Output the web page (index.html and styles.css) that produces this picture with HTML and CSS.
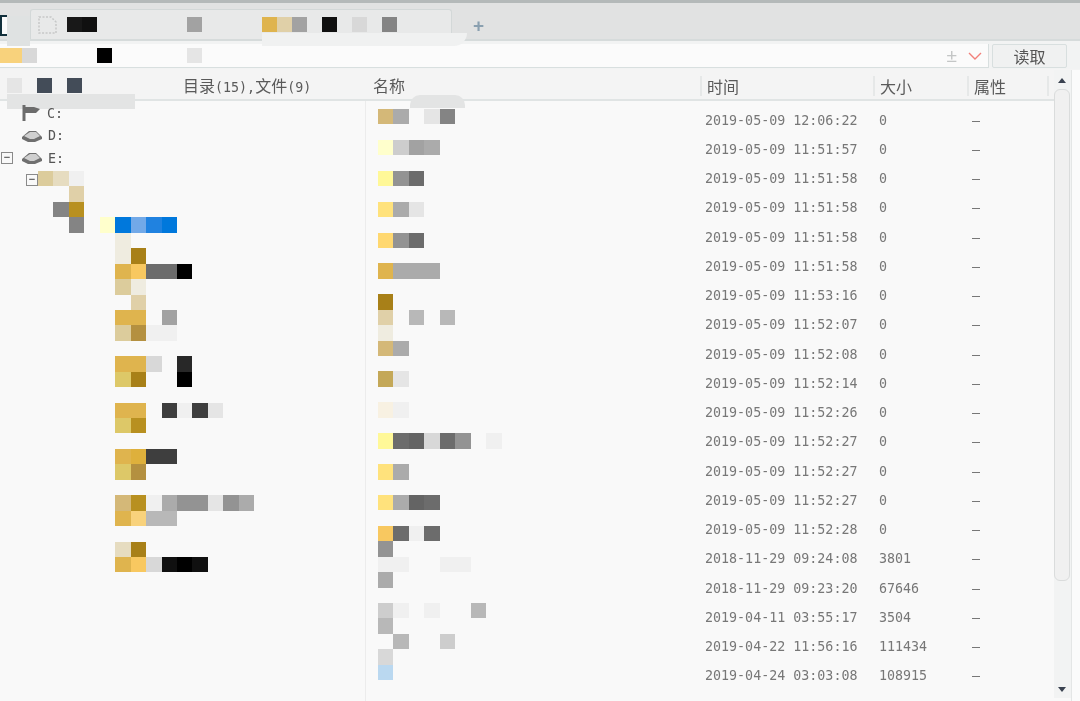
FILE: index.html
```html
<!DOCTYPE html>
<html lang="zh">
<head>
<meta charset="utf-8">
<title>文件管理</title>
<link rel="stylesheet" href="styles.css">
</head>
<body>
<div class="app">
  <div class="topline"></div>
  <div class="tabbar">
    <div class="winmark"></div>
    <div class="tab">
      <svg class="docicon" width="20" height="18" viewBox="0 0 20 18"><path d="M1 1h12l5 5v11H1z" fill="none" stroke="#c6c8c8" stroke-width="1.5" stroke-dasharray="2 1.5"/></svg>
      <div class="strip tabstrip"><i class="k2"></i><i class="k1"></i><i></i><i></i><i></i><i></i><i></i><i></i><i class="g5"></i><i></i><i></i><i></i><i></i><i class="y3"></i><i class="t2"></i><i class="g5"></i><i></i><i class="k1"></i><i></i><i class="g1"></i><i></i><i class="g7"></i></div>
    </div>
    <span class="plus">+</span>
  </div>
  <div class="smear smear-tab"></div>
  <div class="smear smear-left"></div>
  <div class="addr">
    <div class="addr-field">
      <div class="strip addrstrip"><i class="y5 half"></i><i class="g1"></i><i></i><i></i><i></i><i></i><i class="k0"></i><i></i><i></i><i></i><i></i><i></i><i class="g0"></i></div>
      <span class="plusminus">±</span>
      <svg class="chev" width="14" height="8" viewBox="0 0 14 8"><path d="M1 1l6 6 6-6" fill="none" stroke="#f2807a" stroke-width="1.4"/></svg>
    </div>
    <button class="read">读取</button>
  </div>
  <div class="head">
    <div class="h-tree">
      <div class="strip headstrip"><i class="g0"></i><i></i><i class="s1"></i><i></i><i class="s1"></i></div>
      <span class="h-count">目录<span class="asc">(15),</span>文件<span class="asc">(9)</span></span>
    </div>
    <div class="h-name"><span>名称</span></div>
    <div class="h-time"><span>时间</span></div>
    <div class="h-size"><span>大小</span></div>
    <div class="h-attr"><span>属性</span></div>
    <div class="h-end"></div>
  </div>
  <div class="smear smear-head"></div>
  <div class="smear smear-name"></div>
  <div class="main">
    <div class="tree">
      <div class="drive">
        <svg class="flag" width="21" height="18" viewBox="0 0 21 18"><path d="M3 1v16" stroke="#6c6c6c" stroke-width="3"/><path d="M4 3h9l6 2-4 4H4z" fill="#6c6c6c"/></svg>
        <b>C:</b>
      </div>
      <div class="drive">
        <svg width="22" height="14" viewBox="0 0 22 14"><path d="M1 8l7-6h7l6 6v2l-7 3H7l-6-3z" fill="#6f6f6f"/><path d="M3 7l6-4h6l4 4-6 3H9z" fill="#cfcfcf"/></svg>
        <b>D:</b>
      </div>
      <div class="drive">
        <span class="box">−</span>
        <svg width="22" height="14" viewBox="0 0 22 14"><path d="M1 8l7-6h7l6 6v2l-7 3H7l-6-3z" fill="#6f6f6f"/><path d="M3 7l6-4h6l4 4-6 3H9z" fill="#cfcfcf"/></svg>
        <b>E:</b>
      </div>
      <div class="mosaic tree-mosaic">
        <div class="mrow"><span class="box subbox">−</span><i class="t3"></i><i class="t1"></i><i class="g00"></i></div>
        <div class="mrow"><i></i><i></i><i class="t2"></i></div>
        <div class="mrow"><i></i><i class="g7"></i><i class="b2"></i></div>
        <div class="mrow"><i></i><i></i><i class="g7"></i><i></i><i class="u0"></i><i class="a1"></i><i class="a2"></i><i class="a3"></i><i class="a1"></i></div>
        <div class="mrow"><i></i><i></i><i></i><i></i><i></i><i class="e1"></i></div>
        <div class="mrow"><i></i><i></i><i></i><i></i><i></i><i class="e1"></i><i class="b1"></i></div>
        <div class="mrow"><i></i><i></i><i></i><i></i><i></i><i class="y3"></i><i class="y4"></i><i class="g8"></i><i class="g8"></i><i class="k0"></i></div>
        <div class="mrow"><i></i><i></i><i></i><i></i><i></i><i class="t3"></i><i class="e1"></i></div>
        <div class="mrow"><i></i><i></i><i></i><i></i><i></i><i></i><i class="t2"></i></div>
        <div class="mrow"><i></i><i></i><i></i><i></i><i></i><i class="y3"></i><i class="y3"></i><i></i><i class="g5"></i></div>
        <div class="mrow"><i></i><i></i><i></i><i></i><i></i><i class="t3"></i><i class="b3"></i><i class="g00"></i><i class="g00"></i></div>
        <div class="mrow"></div>
        <div class="mrow"><i></i><i></i><i></i><i></i><i></i><i class="y3"></i><i class="y3"></i><i class="g1"></i><i></i><i class="k3"></i></div>
        <div class="mrow"><i></i><i></i><i></i><i></i><i></i><i class="t4"></i><i class="b1"></i><i></i><i></i><i class="k0"></i></div>
        <div class="mrow"></div>
        <div class="mrow"><i></i><i></i><i></i><i></i><i></i><i class="y3"></i><i class="y3"></i><i></i><i class="k4"></i><i class="g00"></i><i class="k4"></i><i class="g0"></i></div>
        <div class="mrow"><i></i><i></i><i></i><i></i><i></i><i class="t4"></i><i class="b2"></i></div>
        <div class="mrow"></div>
        <div class="mrow"><i></i><i></i><i></i><i></i><i></i><i class="y3"></i><i class="y2"></i><i class="k4"></i><i class="k4"></i></div>
        <div class="mrow"><i></i><i></i><i></i><i></i><i></i><i class="t4"></i><i class="b3"></i></div>
        <div class="mrow"></div>
        <div class="mrow"><i></i><i></i><i></i><i></i><i></i><i class="t5"></i><i class="b2"></i><i class="g00"></i><i class="g4"></i><i class="g6"></i><i class="g6"></i><i class="g0"></i><i class="g6"></i><i class="g4"></i></div>
        <div class="mrow"><i></i><i></i><i></i><i></i><i></i><i class="y3"></i><i class="y5"></i><i class="g3"></i><i class="g3"></i></div>
        <div class="mrow"></div>
        <div class="mrow"><i></i><i></i><i></i><i></i><i></i><i class="t1"></i><i class="b1"></i></div>
        <div class="mrow"><i></i><i></i><i></i><i></i><i></i><i class="y3"></i><i class="y4"></i><i class="g1"></i><i class="k1"></i><i class="k0"></i><i class="k1"></i></div>
      </div>
    </div>
    <div class="names mosaic">
      <div class="mrow"><i class="t5"></i><i class="g4"></i><i></i><i class="g0"></i><i class="g7"></i></div>
      <div class="mrow"></div>
      <div class="mrow"><i class="u0"></i><i class="g2"></i><i class="g5"></i><i class="g4"></i></div>
      <div class="mrow"></div>
      <div class="mrow"><i class="u1"></i><i class="g6"></i><i class="g8"></i></div>
      <div class="mrow"></div>
      <div class="mrow"><i class="u2"></i><i class="g4"></i><i class="g0"></i></div>
      <div class="mrow"></div>
      <div class="mrow"><i class="u3"></i><i class="g6"></i><i class="g8"></i></div>
      <div class="mrow"></div>
      <div class="mrow"><i class="y3"></i><i class="g4"></i><i class="g4"></i><i class="g4"></i></div>
      <div class="mrow"></div>
      <div class="mrow"><i class="b1"></i></div>
      <div class="mrow"><i class="t2"></i><i></i><i class="g3"></i><i></i><i class="g3"></i></div>
      <div class="mrow"><i class="e1"></i></div>
      <div class="mrow"><i class="t5"></i><i class="g4"></i></div>
      <div class="mrow"></div>
      <div class="mrow"><i class="t6"></i><i class="g0"></i></div>
      <div class="mrow"></div>
      <div class="mrow"><i class="e2"></i><i class="g00"></i></div>
      <div class="mrow"></div>
      <div class="mrow"><i class="u1"></i><i class="g8"></i><i class="k5"></i><i class="g1"></i><i class="g8"></i><i class="g6"></i><i></i><i class="g00"></i></div>
      <div class="mrow"></div>
      <div class="mrow"><i class="u2"></i><i class="g4"></i></div>
      <div class="mrow"></div>
      <div class="mrow"><i class="u2"></i><i class="g4"></i><i class="k5"></i><i class="g8"></i></div>
      <div class="mrow"></div>
      <div class="mrow"><i class="y4"></i><i class="g8"></i><i class="g00"></i><i class="g8"></i></div>
      <div class="mrow"><i class="g6"></i></div>
      <div class="mrow"><i class="g00"></i><i class="g00"></i><i></i><i></i><i class="g00"></i><i class="g00"></i></div>
      <div class="mrow"><i class="g4"></i></div>
      <div class="mrow"></div>
      <div class="mrow"><i class="g2"></i><i class="g00"></i><i></i><i class="g00"></i><i></i><i></i><i class="g3"></i></div>
      <div class="mrow"><i class="g3"></i></div>
      <div class="mrow"><i></i><i class="g3"></i><i></i><i></i><i class="g2"></i></div>
      <div class="mrow"><i class="g1"></i></div>
      <div class="mrow"><i class="sky"></i></div>
    </div>
    <div class="details">
      <div class="row"><span>2019-05-09 12:06:22</span><span>0</span><span>—</span></div>
      <div class="row"><span>2019-05-09 11:51:57</span><span>0</span><span>—</span></div>
      <div class="row"><span>2019-05-09 11:51:58</span><span>0</span><span>—</span></div>
      <div class="row"><span>2019-05-09 11:51:58</span><span>0</span><span>—</span></div>
      <div class="row"><span>2019-05-09 11:51:58</span><span>0</span><span>—</span></div>
      <div class="row"><span>2019-05-09 11:51:58</span><span>0</span><span>—</span></div>
      <div class="row"><span>2019-05-09 11:53:16</span><span>0</span><span>—</span></div>
      <div class="row"><span>2019-05-09 11:52:07</span><span>0</span><span>—</span></div>
      <div class="row"><span>2019-05-09 11:52:08</span><span>0</span><span>—</span></div>
      <div class="row"><span>2019-05-09 11:52:14</span><span>0</span><span>—</span></div>
      <div class="row"><span>2019-05-09 11:52:26</span><span>0</span><span>—</span></div>
      <div class="row"><span>2019-05-09 11:52:27</span><span>0</span><span>—</span></div>
      <div class="row"><span>2019-05-09 11:52:27</span><span>0</span><span>—</span></div>
      <div class="row"><span>2019-05-09 11:52:27</span><span>0</span><span>—</span></div>
      <div class="row"><span>2019-05-09 11:52:28</span><span>0</span><span>—</span></div>
      <div class="row"><span>2018-11-29 09:24:08</span><span>3801</span><span>—</span></div>
      <div class="row"><span>2018-11-29 09:23:20</span><span>67646</span><span>—</span></div>
      <div class="row"><span>2019-04-11 03:55:17</span><span>3504</span><span>—</span></div>
      <div class="row"><span>2019-04-22 11:56:16</span><span>111434</span><span>—</span></div>
      <div class="row"><span>2019-04-24 03:03:08</span><span>108915</span><span>—</span></div>
    </div>
    <div class="scroll">
      <div class="thumb"></div>
      <span class="arrow-down"></span>
    </div>
    <div class="rightedge"></div>
  </div>
  <div class="scroll-up"></div>
</div>
</body>
</html>
```
FILE: styles.css
```css
* { box-sizing: border-box; }
html, body { margin: 0; padding: 0; background: #f9f9f9; }
body { width: 1080px; height: 701px; overflow: hidden; }
.app {
  position: relative;
  width: 1080px;
  height: 701px;
  overflow: hidden;
  filter: blur(0.45px);
  font-family: "DejaVu Sans Mono", "Noto Sans CJK SC", monospace;
  color: #777;
}
.topline { height: 3px; background: #b4b9b9; }

.strip { display: flex; }
.strip i, .mrow i { display: block; flex: none; width: 15.45px; height: 15.45px; }

.tabbar {
  height: 38px;
  background: #e1e2e2;
  border-bottom: 2px solid #d6dbdb;
  display: flex;
  align-items: flex-end;
}
.winmark {
  width: 7px;
  margin: 12px 23px 3px 0;
  align-self: stretch;
  border: 2px solid #12303c;
  border-right: 0;
  background: #fbfbfb;
}
.tab {
  width: 422px;
  height: 30px;
  background: #e8e9e9;
  border: 1px solid #d3d8d8;
  border-bottom: 0;
  border-radius: 3px 3px 0 0;
  display: flex;
  align-items: center;
  padding-left: 7px;
}
.docicon { flex: none; }
.tabstrip { margin-left: 9px; margin-top: -1px; }
.tabstrip i { width: 15px; height: 15px; }
.plus {
  margin: 0 0 1px 21px;
  font: bold 19px/24px "Liberation Sans", sans-serif;
  color: #8aa0b0;
}

.addr {
  height: 28px;
  padding: 3px 13px 1px 0;
  display: flex;
  gap: 3px;
  background: #f2f3f3;
}
.addr-field {
  width: 990px;
  background: #fbfbfb;
  border-bottom: 1px solid #d8dfdf;
  border-right: 1px solid #d8dfdf;
  display: flex;
  align-items: center;
}
.addrstrip { flex: 1; }
.addrstrip i { width: 15px; height: 15px; }
.addrstrip .half { width: 22px; }
.plusminus { font: 19px/20px "Liberation Sans", sans-serif; color: #c4c6c6; margin-right: 11px; }
.chev { margin-right: 6px; }
.read {
  flex: none;
  width: 75px;
  padding: 0;
  height: 24px;
  background: #f0f1f1;
  border: 1px solid #d8dfdf;
  border-radius: 2px;
  font: 16px/20px "Noto Sans CJK SC", sans-serif;
  color: #555;
}

.head {
  height: 32px;
  padding-top: 2px;
  display: flex;
  background: #f4f4f4;
  border-bottom: 2px solid #e0e4e4;
  font: 16px/24px "Noto Sans CJK SC", sans-serif;
  color: #5a5a5a;
}
.head > div { flex: none; display: flex; align-items: center; }
.h-tree { width: 366px; padding-left: 7px; }
.headstrip { width: 176px; }
.headstrip i { width: 15px; height: 15px; }
.asc { font: 13.33px/16px "DejaVu Sans Mono", monospace; }
.h-name { width: 334px; padding-left: 7px; }
.h-time, .h-size, .h-attr, .h-end { margin: 5px 0 3px; border-left: 2px solid #e6e8e8; }
.h-time { width: 173px; padding-left: 5px; }
.h-size { width: 94px; padding-left: 5px; }
.h-attr { width: 80px; padding-left: 5px; }
.h-end { width: 33px; }

.smear { position: absolute; background: #e3e4e4; }
.smear-head { left: 7px; top: 94px; width: 128px; height: 15px; }
.smear-name { left: 410px; top: 95px; width: 55px; height: 13px; border-radius: 10px 10px 0 0; }
.smear-tab { left: 262px; top: 33px; width: 205px; height: 13px; background: #f0f1f1; border-radius: 0 0 16px 0; }
.smear-left { left: 7px; top: 16px; width: 23px; height: 30px; background: #dfe2e2; }

.main { display: flex; height: 600px; background: #f9f9f9; }

.tree { flex: none; width: 366px; padding-top: 1px; border-right: 1px solid #ececec; }
.drive {
  height: 22.5px;
  padding-left: 21px;
  display: flex;
  align-items: center;
  gap: 5px;
  position: relative;
  font-size: 13.33px;
}
.drive b { color: #555; font-weight: normal; }
.drive svg { flex: none; }
.box {
  width: 12px;
  height: 12px;
  flex: none;
  border: 1.5px solid #8a8a8a;
  background: #f9f9f9;
  color: #666;
  font: bold 11px/9px "Liberation Sans", sans-serif;
  text-align: center;
}
.drive .box { position: absolute; left: 1px; top: 5px; }
.subbox { margin-left: -12px; margin-top: 3px; }
.tree-mosaic { padding-left: 38px; margin-top: 1.5px; }
.mrow { display: flex; height: 15.45px; }

.names { flex: none; width: 334px; padding: 8px 0 0 12px; }

.details { flex: none; width: 354px; padding-top: 5px; }
.row {
  height: 29.26px;
  display: grid;
  grid-template-columns: 174px 93px auto;
  padding-left: 5px;
  align-items: center;
  font-size: 13.33px;
  line-height: 16px;
}

.scroll {
  flex: none;
  width: 17px;
  margin-top: -31px;
  height: 628px;
  margin-bottom: 3px;
  background: #f2f3f3;
  position: relative;
}
.thumb {
  position: absolute;
  left: 0;
  top: 19px;
  width: 16px;
  height: 492px;
  background: #f0f0f0;
  border: 1px solid #dadcdc;
  border-radius: 6px;
}
.scroll-up {
  position: absolute;
  left: 1058px;
  top: 78px;
  width: 0;
  height: 0;
  border: 4px solid transparent;
  border-top: 0;
  border-bottom: 5px solid #3a4250;
}
.arrow-down {
  position: absolute;
  left: 4px;
  top: 617px;
  width: 0;
  height: 0;
  border: 4px solid transparent;
  border-bottom: 0;
  border-top: 5px solid #3a4250;
}
.rightedge {
  flex: none;
  width: 9px;
  margin-top: -31px;
  border-left: 1px solid #e4e6e6;
  background: #fbfbfb;
}

/* mosaic palette */
.k0 { background: #000; } .k1 { background: #101010; } .k2 { background: #181818; }
.k3 { background: #282828; } .k4 { background: #3e3e3e; } .k5 { background: #646464; }
.s1 { background: #434c58; }
.g00 { background: #f0f0f0; } .g0 { background: #e5e5e5; } .g1 { background: #d8d8d8; }
.g2 { background: #cdcdcd; } .g3 { background: #b8b8b8; } .g4 { background: #ababab; }
.g5 { background: #a2a2a2; } .g6 { background: #939393; } .g7 { background: #848484; }
.g8 { background: #6c6c6c; }
.y2 { background: #deb03c; } .y3 { background: #dfb44e; } .y4 { background: #f8c860; }
.y5 { background: #f8d27c; }
.u0 { background: #ffffcc; } .u1 { background: #fff898; } .u2 { background: #ffe27c; }
.u3 { background: #ffd870; }
.t1 { background: #e6dcc0; } .t2 { background: #e0d0a8; } .t3 { background: #dccc9c; }
.t4 { background: #ddc868; } .t5 { background: #d4b878; } .t6 { background: #c4a858; }
.b1 { background: #a88018; } .b2 { background: #b89020; } .b3 { background: #b49040; }
.e1 { background: #efece0; } .e2 { background: #f8f1e2; }
.a1 { background: #0078dc; } .a2 { background: #72a9e8; } .a3 { background: #2082e0; }
.sky { background: #bad8f0; }
```
